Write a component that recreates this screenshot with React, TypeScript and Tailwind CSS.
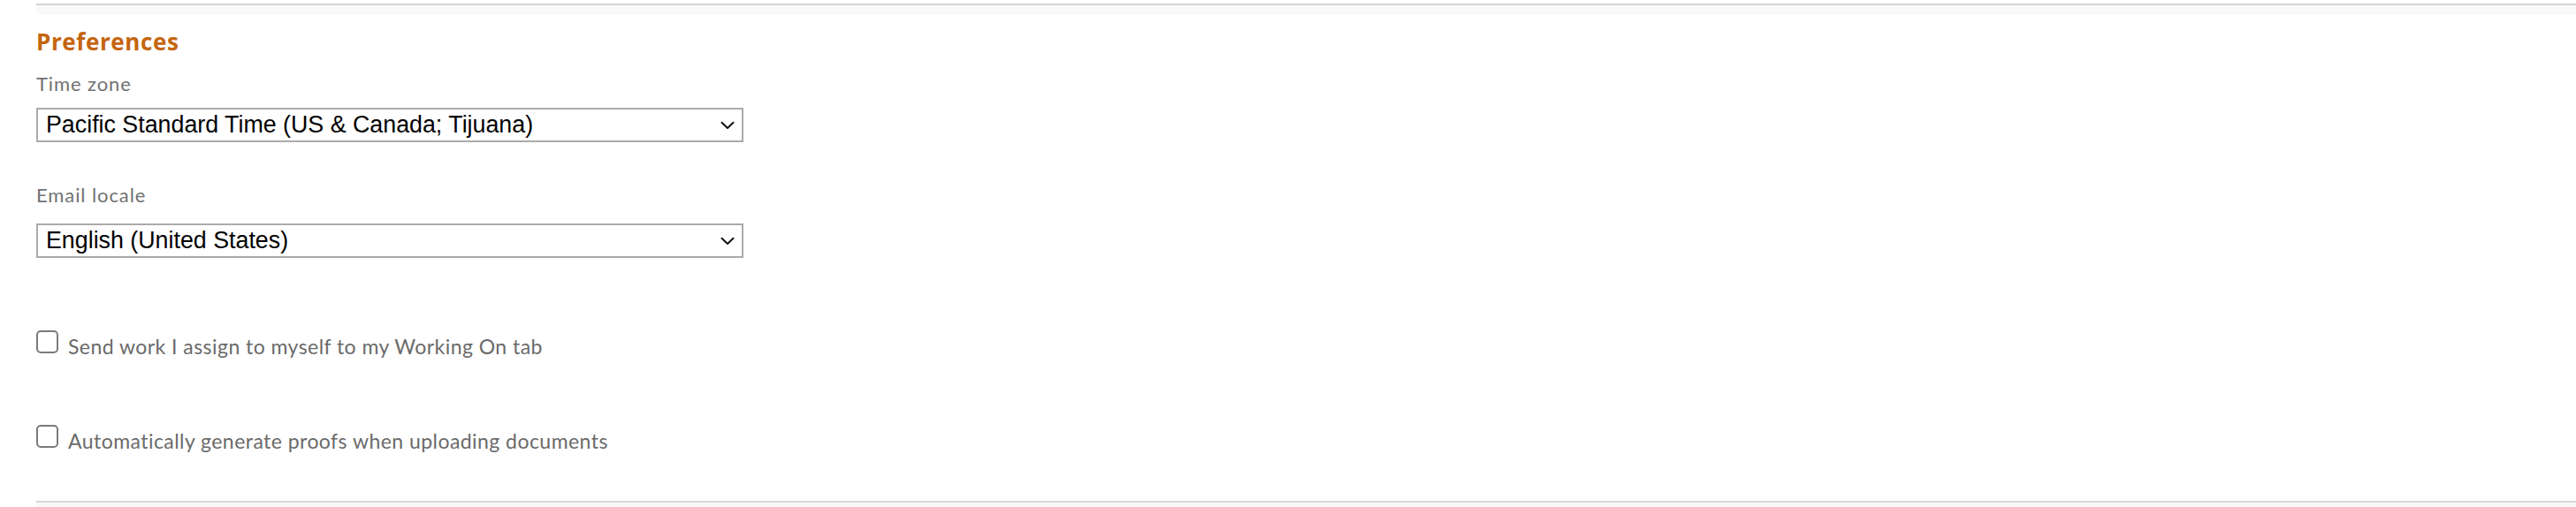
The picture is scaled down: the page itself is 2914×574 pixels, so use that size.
import React from "react";

function Chevron() {
  return (
    <svg width="16" height="10" viewBox="0 0 16 10" className="shrink-0">
      <path d="M1.5 1.8 L8 8 L14.5 1.8" fill="none" stroke="#111" strokeWidth="2" strokeLinecap="round" strokeLinejoin="round" />
    </svg>
  );
}

function SelectBox({ value }: { value: string }) {
  return (
    <div className="flex h-[39px] w-[800px] items-center justify-between border-2 border-[#ababab] bg-white pl-[9px] pr-[8px]">
      <span className="text-[26.8px] leading-none text-black" style={{ fontFamily: '"Liberation Sans", Arial, sans-serif' }}>
        {value}
      </span>
      <Chevron />
    </div>
  );
}

function CheckRow({ label }: { label: string }) {
  return (
    <div className="flex items-end">
      <div className="h-[26px] w-[25px] shrink-0 rounded-[5px] border-2 border-[#7b7b7b] bg-white" />
      <span className="ml-[11px] translate-y-[5px] text-[23px] leading-[26px] tracking-[0.45px] text-[#6a6a6a]">{label}</span>
    </div>
  );
}

export default function App() {
  return (
    <div className="min-h-[574px] w-full bg-white pl-[41px]" style={{ fontFamily: 'Lato, "Open Sans", sans-serif' }}>
      <div className="h-[4px]" />
      <div className="h-[12px] border-t-2 border-[#d6d6d6] bg-[#f9f9f9]" />
      <h2
        className="mt-[15px] text-[26px] font-bold leading-[32px] tracking-[0.6px] text-[#c4650f]"
        style={{ fontFamily: '"Open Sans", Lato, sans-serif' }}
      >
        Preferences
      </h2>
      <div className="mt-[19px] text-[22px] leading-[26px] tracking-[0.9px] text-[#717171]">Time zone</div>
      <div className="mt-[14px]">
        <SelectBox value="Pacific Standard Time (US & Canada; Tijuana)" />
      </div>
      <div className="mt-[47px] text-[22px] leading-[26px] tracking-[0.9px] text-[#717171]">Email locale</div>
      <div className="mt-[19px]">
        <SelectBox value="English (United States)" />
      </div>
      <div className="mt-[82px]">
        <CheckRow label="Send work I assign to myself to my Working On tab" />
      </div>
      <div className="mt-[81px]">
        <CheckRow label="Automatically generate proofs when uploading documents" />
      </div>
      <div className="mt-[60px] h-[8px] border-t-2 border-[#d6d6d6] bg-[#f9f9f9]" />
    </div>
  );
}
